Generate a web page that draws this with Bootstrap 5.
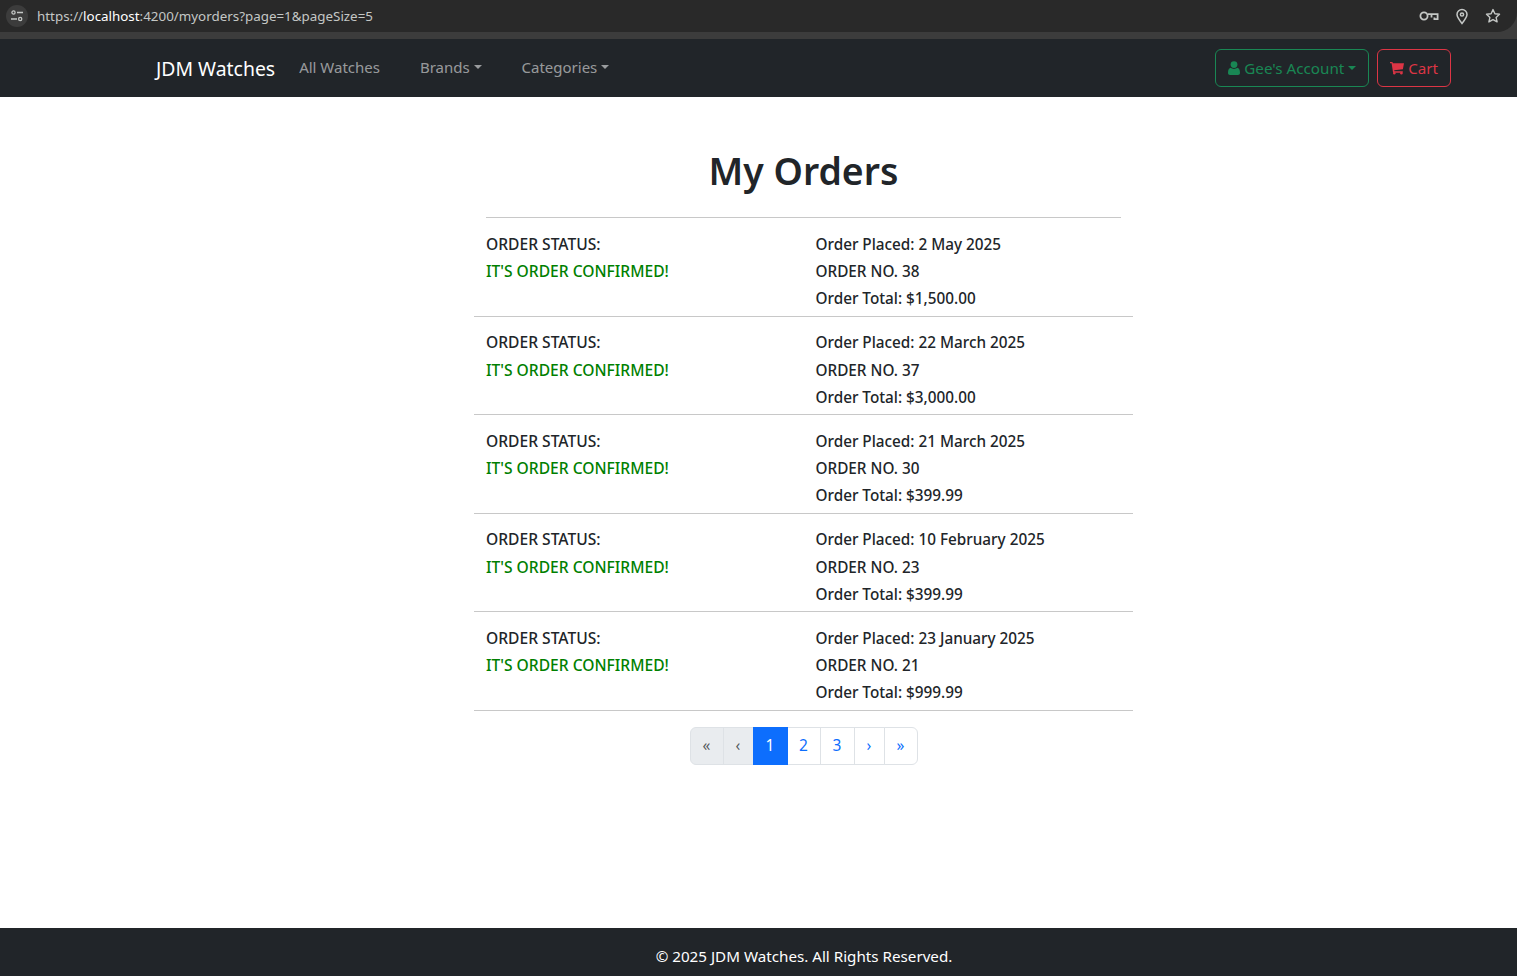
<!DOCTYPE html>
<html lang="en">
<head>
    <meta charset="UTF-8">
    <meta name="viewport" content="width=device-width, initial-scale=1.0">
    <title>JDM Watches</title>
    <link href="https://cdn.jsdelivr.net/npm/bootstrap@5.3.0/dist/css/bootstrap.min.css" rel="stylesheet">
    <style>
        body {
            font-family: "Noto Sans", "Open Sans", sans-serif;
            font-size: 15.6px;
            font-weight: 500;
            color: #212529;
        }

        .chrome-bar {
            height: 39px;
            background-color: #3c3c3c;
        }

        .chrome-inner {
            height: 32px;
            background-color: #292929;
            border-radius: 0 0 20px 0;
            padding: 0 16px 0 6px;
        }

        .chrome-tune {
            width: 22px;
            height: 22px;
            border-radius: 50%;
            background-color: #3c3c3c;
            margin-right: 9px;
        }

        .chrome-url {
            font-size: 13.38px;
            font-weight: 400;
            color: #c4c7c5;
        }

        .chrome-url b {
            font-weight: 400;
            color: #fff;
        }

        .shop-nav {
            height: 58px;
            padding: 0 66px 0 156px;
        }

        .shop-nav .navbar-brand {
            font-size: 19.4px;
            font-weight: 400;
            margin-right: 16px;
            padding: 0;
            position: relative;
            top: 1px;
        }

        .shop-nav .nav-link {
            font-size: 15px;
            font-weight: 400;
            color: rgba(255, 255, 255, .55);
            padding-top: 0;
            padding-bottom: 2px;
            margin-right: 24px;
        }

        .acct-btn {
            font-size: 15.2px;
            font-weight: 400;
            height: 38px;
            padding: 0 12px;
            display: inline-flex;
            align-items: center;
        }

        .orders-title {
            font-size: 37.4px;
            font-weight: 600;
            text-align: center;
            margin: 0;
            padding: 51px 0 23px;
            line-height: 46px;
        }

        .orders-main {
            padding-left: 90px;
        }

        .orders-wrap {
            width: 659px;
            margin: 0 auto;
        }

        .top-rule {
            height: 1px;
            margin: 0 12px;
            background-color: #c8c8c8;
        }

        .order-row {
            height: 98.5px;
            padding: 12.8px 0 0;
            border-bottom: 1px solid #c8c8c8;
            line-height: 27.2px;
        }

        .order-info {
            font-size: 15.3px;
        }

        .order-ok {
            color: green;
        }

        .orders-pager {
            margin-top: 16px;
        }

        .orders-pager .page-link {
            font-size: 15.5px;
            font-weight: 400;
            height: 38px;
            padding: 1px 0 0;
            display: flex;
            align-items: center;
            justify-content: center;
        }

        .pg-a { width: 34px; }
        .pg-b { width: 31px; }
        .pg-n { width: 35px; }

        .shop-footer {
            height: 48px;
            line-height: 57px;
            overflow: hidden;
            font-size: 15.2px;
            font-weight: 400;
            padding-left: 91px;
        }
    </style>
</head>
<body class="d-flex flex-column min-vh-100">
    <div class="chrome-bar">
        <div class="chrome-inner d-flex align-items-center">
            <span class="chrome-tune d-flex align-items-center justify-content-center">
                <svg width="14" height="14" viewBox="0 0 14 14" fill="none" stroke="#c4c7c5" stroke-width="1.3">
                    <circle cx="3.5" cy="3.5" r="1.6"/><path d="M7 3.5h6M1 10h6"/><circle cx="10.2" cy="10" r="1.6"/>
                </svg>
            </span>
            <span class="chrome-url flex-grow-1">https://<b>localhost</b>:4200/myorders?page=1&amp;pageSize=5</span>
            <svg class="me-3" width="20" height="12" viewBox="0 0 20 12" fill="none" stroke="#c4c7c5" stroke-width="1.8">
                <circle cx="5" cy="6" r="3.6"/><path d="M8.8 4.200h9.800v5h-3.200V7.500M12.500 4.200v3.300"/>
            </svg>
            <svg class="me-3" width="14" height="17" viewBox="0 0 14 17" fill="none" stroke="#c4c7c5" stroke-width="1.5">
                <path d="M7 15.5C4 11.8 2 9.3 2 6.600a5 5 0 0 1 10 0c0 2.700-2 5.200-5 8.900z"/><circle cx="7" cy="6.500" r="1.600"/>
            </svg>
            <svg width="16" height="16" viewBox="0 0 16 16" fill="none" stroke="#c4c7c5" stroke-width="1.4" stroke-linejoin="round">
                <path d="M8 1.600l1.900 4.200 4.600.5-3.400 3.100 1 4.500L8 11.600l-4.100 2.300 1-4.500L1.500 6.300l4.600-.5z"/>
            </svg>
        </div>
    </div>

    <nav class="navbar navbar-expand-lg navbar-dark bg-dark shop-nav">
        <a class="navbar-brand" href="#">JDM Watches</a>
        <ul class="navbar-nav me-auto flex-row">
            <li class="nav-item"><a class="nav-link" href="#">All Watches</a></li>
            <li class="nav-item"><a class="nav-link dropdown-toggle" href="#">Brands</a></li>
            <li class="nav-item"><a class="nav-link dropdown-toggle" href="#">Categories</a></li>
        </ul>
        <div class="d-flex gap-2">
            <button class="btn btn-outline-success dropdown-toggle acct-btn" type="button">
                <svg class="me-1" width="12" height="14" viewBox="0 0 12 14" fill="currentColor">
                    <circle cx="6" cy="3.600" r="3.400"/><path d="M0 12c0-3.300 1-5 2.800-5.200C3.600 7.500 4.700 8 6 8s2.400-.5 3.200-1.200C11 7 12 8.700 12 12c0 1.200-.8 2-2 2H2c-1.200 0-2-.8-2-2z"/>
                </svg>Gee's Account
            </button>
            <button class="btn btn-outline-danger acct-btn" type="button">
                <svg class="me-1" width="14" height="14" viewBox="0 0 15 14" fill="currentColor">
                    <path d="M0 .5h2.600l.5 1.500H15l-1.200 6.300-9.300 1 .3 1.200h8.900V12H3.300L1.700 2H0z"/><circle cx="4.600" cy="12.600" r="1.300"/><circle cx="12.200" cy="12.600" r="1.300"/>
                </svg>Cart
            </button>
        </div>
    </nav>

    <main class="flex-grow-1 orders-main">
        <h1 class="orders-title">My Orders</h1>
        <div class="orders-wrap">
            <div class="top-rule"></div>
            <div id="orderRows"></div>
        </div>
        <nav class="orders-pager d-flex justify-content-center">
            <ul class="pagination mb-0">
                <li class="page-item disabled"><a class="page-link pg-a" href="#">«</a></li>
                <li class="page-item disabled"><a class="page-link pg-b" href="#">‹</a></li>
                <li class="page-item active"><a class="page-link pg-n" href="#">1</a></li>
                <li class="page-item"><a class="page-link pg-a" href="#">2</a></li>
                <li class="page-item"><a class="page-link pg-n" href="#">3</a></li>
                <li class="page-item"><a class="page-link pg-b" href="#">›</a></li>
                <li class="page-item"><a class="page-link pg-a" href="#">»</a></li>
            </ul>
        </nav>
    </main>

    <footer class="bg-dark text-white text-center shop-footer">© 2025 JDM Watches. All Rights Reserved.</footer>

<script>
    const orders = [
        ["2 May 2025", 38, "$1,500.00"],
        ["22 March 2025", 37, "$3,000.00"],
        ["21 March 2025", 30, "$399.99"],
        ["10 February 2025", 23, "$399.99"],
        ["23 January 2025", 21, "$999.99"]
    ];
    document.getElementById("orderRows").innerHTML = orders.map(function(o) {
        return '<div class="row order-row mx-0">' +
            '<div class="col-6"><div>ORDER STATUS:</div><div class="order-ok">IT\'S ORDER CONFIRMED!</div></div>' +
            '<div class="col-6 order-info"><div>Order Placed: ' + o[0] + '</div><div>ORDER NO. ' + o[1] + '</div><div>Order Total: ' + o[2] + '</div></div>' +
            '</div>';
    }).join("");
</script>
<script src="https://cdn.jsdelivr.net/npm/bootstrap@5.3.0/dist/js/bootstrap.bundle.min.js"></script>
</body>
</html>
